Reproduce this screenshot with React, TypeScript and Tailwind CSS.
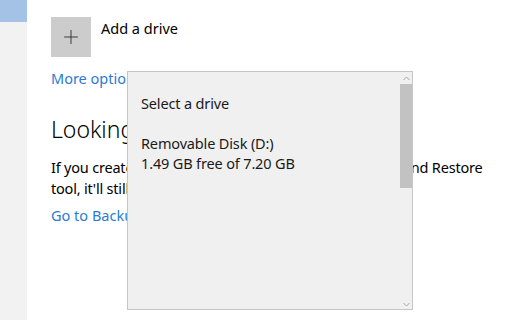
import { Plus } from 'lucide-react'

const font = { fontFamily: '"Noto Sans", "Open Sans", sans-serif' }

function DrivePicker() {
  return (
    <div className="absolute left-[127px] top-[71px] w-[286px] h-[239px] border border-[#c6c6c6] bg-[#f0f0f0] flex">
      <div className="flex-1 pl-[13px] pt-[21px] text-[14.5px] leading-[20px] tracking-[-0.15px] text-[#1a1a1a]">
        <p>Select a drive</p>
        <div className="mt-[20px]">
          <p>Removable Disk (D:)</p>
          <p>1.49 GB free of 7.20 GB</p>
        </div>
      </div>
      <div className="w-[12px] flex flex-col items-center">
        <svg width="7" height="5" viewBox="0 0 7 5" className="mt-[4px]">
          <path d="M0.5 4 L3.5 1 L6.5 4" fill="none" stroke="#a6a6a6" strokeWidth="1" />
        </svg>
        <div className="w-[12px] h-[104px] mt-[3px] bg-[#c2c2c2]" />
        <div className="flex-1" />
        <svg width="7" height="5" viewBox="0 0 7 5" className="mb-[2px]">
          <path d="M0.5 1 L3.5 4 L6.5 1" fill="none" stroke="#a6a6a6" strokeWidth="1" />
        </svg>
      </div>
    </div>
  )
}

export default function App() {
  return (
    <div className="relative w-[522px] h-[320px] bg-white flex overflow-hidden" style={font}>
      <div className="w-[27px] bg-[#f2f2f2] flex flex-col">
        <div className="h-[22px] bg-[#a3c2e6]" />
      </div>
      <div className="flex-1 pl-[24px] pt-[17px] text-black text-[14.5px]">
        <div className="flex items-start gap-[10px]">
          <div className="w-[40px] h-[40px] bg-[#cccccc] flex items-center justify-center">
            <Plus className="w-[22px] h-[22px] text-[#3a3a3a]" strokeWidth={1.1} />
          </div>
          <span className="leading-[20px] mt-[1px]">Add a drive</span>
        </div>
        <p className="mt-[11px] leading-[20px] text-[#2b7bd4]">More options</p>
        <h2 className="mt-[26px] text-[23px] font-light leading-[30px]">Looking for an older backup?</h2>
        <p className="mt-[13px] leading-[21px] w-[450px] tracking-[-0.2px]">
          If you created a backup using the Windows 7 Backup and Restore tool, it'll still work in Windows 10.
        </p>
        <p className="mt-[6px] leading-[20px] text-[#2b7bd4]">Go to Backup and Restore (Windows 7)</p>
      </div>
      <DrivePicker />
    </div>
  )
}
